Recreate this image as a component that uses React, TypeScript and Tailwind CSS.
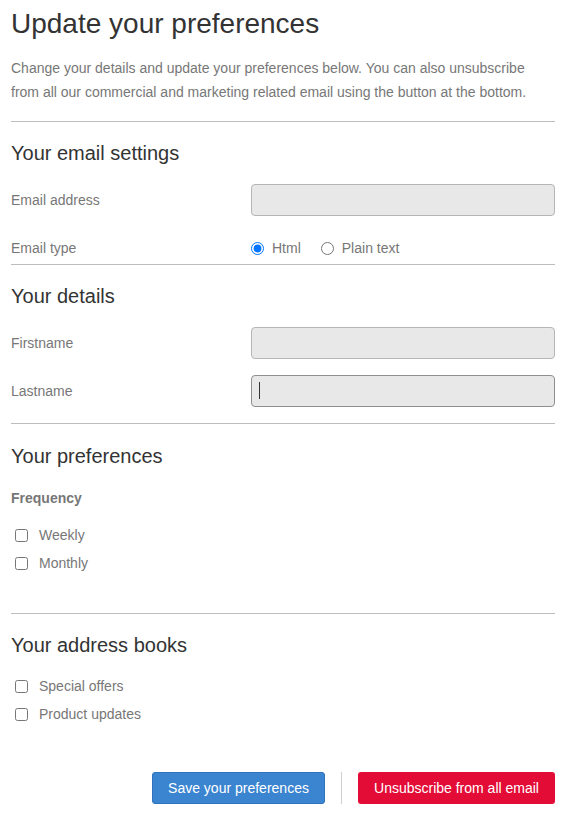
const labelCls = "w-[240px] shrink-0 text-[14px] text-[#777]";
const inputCls =
  "h-[32px] flex-1 rounded-[4px] border border-[#b5b5b5] bg-[#e8e8e8] px-2 text-[14px] outline-none";

const Divider = () => <div className="h-px bg-[#bdbdbd]" />;

const Heading = ({ children }: { children: React.ReactNode }) => (
  <h2 className="text-[20px] leading-[28px] text-[#333]">{children}</h2>
);

const Check = ({ label }: { label: string }) => (
  <label className="flex h-[28px] items-center">
    <input type="checkbox" className="ml-[4px] h-[13px] w-[13px]" />
    <span className="ml-[11px] text-[14px] text-[#777]">{label}</span>
  </label>
);

export default function App() {
  return (
    <div
      className="min-h-screen bg-white pl-[11px] pr-[19px] pt-[8px] pb-[17px]"
      style={{ fontFamily: '"Liberation Sans", Arial, sans-serif' }}
    >
      {/* Intro */}
      <h1 className="text-[28px] leading-[32px] text-[#333]">
        Update your preferences
      </h1>
      <p className="mt-[16px] text-[14px] leading-[24px] text-[#777]">
        Change your details and update your preferences below. You can also
        unsubscribe from all our commercial and marketing related email using
        the button at the bottom.
      </p>

      <div className="mt-[17px]">
        <Divider />
      </div>

      {/* Email settings */}
      <div className="pt-[17px]">
        <Heading>Your email settings</Heading>
        <div className="mt-[17px] flex items-center">
          <span className={labelCls}>Email address</span>
          <input type="email" className={inputCls} />
        </div>
        <div className="mt-[17px] flex h-[31px] items-center">
          <span className={labelCls}>Email type</span>
          <label className="flex items-center">
            <input
              type="radio"
              name="type"
              defaultChecked
              className="m-0 h-[13px] w-[13px]"
            />
            <span className="ml-[8px] text-[14px] text-[#777]">Html</span>
          </label>
          <label className="ml-[20px] flex items-center">
            <input type="radio" name="type" className="m-0 h-[13px] w-[13px]" />
            <span className="ml-[8px] text-[14px] text-[#777]">Plain text</span>
          </label>
        </div>
      </div>

      <Divider />

      {/* Details */}
      <div className="pt-[17px]">
        <Heading>Your details</Heading>
        <div className="mt-[17px] flex items-center">
          <span className={labelCls}>Firstname</span>
          <input type="text" className={inputCls} />
        </div>
        <div className="mt-[16px] flex items-center">
          <span className={labelCls}>Lastname</span>
          <div className="relative flex flex-1">
            <input
              type="text"
              className="h-[32px] flex-1 rounded-[4px] border border-[#8f8f8f] bg-[#e8e8e8] px-2 text-[14px] outline-none"
            />
            <span className="absolute left-[8px] top-[7px] h-[17px] w-px bg-[#333]" />
          </div>
        </div>
      </div>

      <div className="mt-[16px]">
        <Divider />
      </div>

      {/* Preferences */}
      <div className="pt-[18px]">
        <Heading>Your preferences</Heading>
        <div className="mt-[18px] text-[14px] font-bold leading-[20px] text-[#777]">
          Frequency
        </div>
        <div className="mt-[13px]">
          <Check label="Weekly" />
          <Check label="Monthly" />
        </div>
      </div>

      <div className="mt-[36px]">
        <Divider />
      </div>

      {/* Address books */}
      <div className="pt-[17px]">
        <Heading>Your address books</Heading>
        <div className="mt-[13px]">
          <Check label="Special offers" />
          <Check label="Product updates" />
        </div>
      </div>

      {/* Buttons */}
      <div className="mt-[44px] flex items-center justify-end">
        <button className="h-[32px] w-[173px] rounded-[3px] border border-[#2f72bd] bg-[#3a84d0] text-[14px] text-white">
          Save your preferences
        </button>
        <div className="mx-[16px] h-[32px] w-px bg-[#d0d0d0]" />
        <button className="h-[32px] w-[197px] rounded-[3px] bg-[#e30c36] text-[14px] text-white">
          Unsubscribe from all email
        </button>
      </div>
    </div>
  );
}
